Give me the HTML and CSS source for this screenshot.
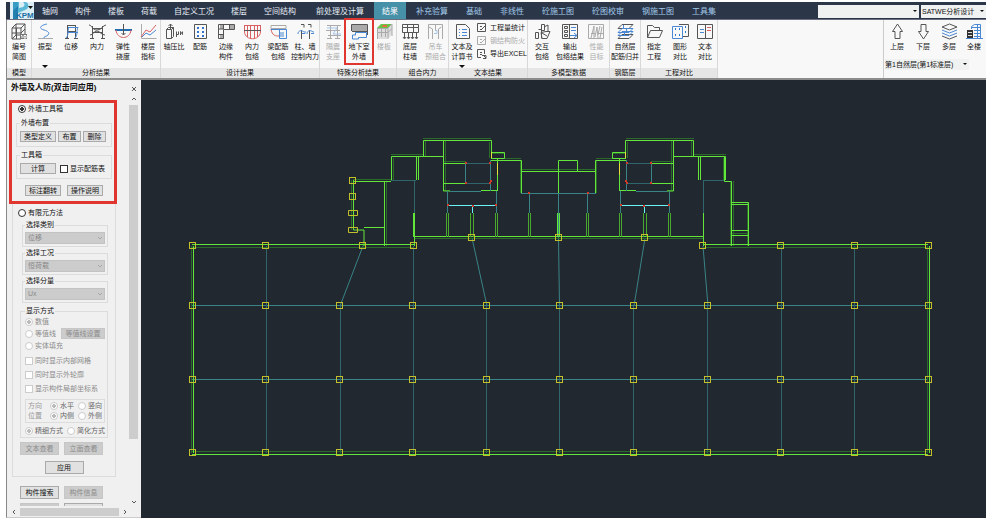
FILE: index.html
```html
<!DOCTYPE html>
<html lang="zh-CN">
<head>
<meta charset="utf-8">
<title>SATWE分析设计</title>
<link rel="stylesheet" href="styles.css">
</head>
<body>
<div class="app">
<header class="topbar">
  <svg class="logo" viewBox="0 0 24 17" role="img" aria-label="PKPM">
    <rect width="24" height="17" fill="#dceef5"/>
    <path d="M3 0h5v17H3z" fill="#3a9cc4"/><path d="M8 0h7c4 0 5 7 0 8L8 11z" fill="#5bb9d6"/><path d="M9 0h4c2 1 2 4 0 5L9 6z" fill="#dceef5"/>
    <path d="M3 9l5-5v13H3z" fill="#2280b0"/>
    <path d="M18 4h5l-2.500 3z" fill="#111"/>
    <text x="6" y="16" class="logo-text">KPM</text>
  </svg>
  <nav class="tabs">
    <a href="#">轴网</a><a href="#">构件</a><a href="#">楼板</a><a href="#">荷载</a><a href="#">自定义工况</a><a href="#">楼层</a><a href="#">空间结构</a>
  </nav>
  <nav class="tabs tabs-result">
    <a href="#">前处理及计算</a><a href="#" class="active">结果</a><a href="#">补充验算</a><a href="#">基础</a><a href="#">非线性</a><a href="#">砼施工图</a><a href="#">砼图校审</a><a href="#">钢施工图</a><a href="#">工具集</a>
  </nav>
  <div class="combos">
    <span class="combo combo-search"><select aria-label="搜索"><option></option></select></span>
    <span class="combo combo-module"><select aria-label="模块"><option>SATWE分析设计</option></select></span>
  </div>
</header>

<div class="ribbon">
  <section class="group g-model">
    <div class="items">
      <button class="tool"><svg viewBox="0 0 17 17"><path d="M1 5l4-4h9v11l-4 4H1zM1 5h9v11M10 5l4-4M5 1v11h9M1 16l4-4M1 10h9l4-4M5.500 5v11" class="k"/><path d="M9 11h7v5H9z" fill="#777"/><path d="M10 12.500h1v2.500M13 12.500h2v2.500h-2z" stroke="#fff" fill="none"/></svg><span>编号<br>简图</span></button>
    </div>
    <h2>模型</h2>
  </section>
  <section class="group g-analysis">
    <div class="items">
      <button class="tool more"><svg viewBox="0 0 17 17"><path d="M1 15.500h15" class="g"/><path d="M10 1C1 3 3 6 7 7s6 3 4 5-4 1-4 3" class="b"/></svg><span>振型</span></button>
      <button class="tool"><svg viewBox="0 0 17 17"><path d="M4.500 2v14M12.500 2v14M4 2.500h9M4 8.500h9M2 15.500h4M11 15.500h4" class="k"/><path d="M5 4.500h10M5 9.500h10M6 4c-2 5 0 8-3 11M15 4c-2 5 0 8-3 11" class="b"/></svg><span>位移</span></button>
      <button class="tool"><svg viewBox="0 0 17 17"><path d="M3.500 3v13M13.500 3v13M3 5.500h11M3 9.500h11M1 15.500h4M12 15.500h4" class="k"/><path d="M0 2c3 0 3 5 8 5s6-5 9-5M1 12c3 0 4-4 7-4s4 4 8 4" class="k"/></svg><span>内力</span></button>
      <button class="tool"><svg viewBox="0 0 17 17"><path d="M0 7h17" stroke="#236caf" stroke-width="2"/><path d="M1 7c1 10 14 10 15 0" class="r"/><path d="M8.500 1v11M6.500 10l2 2 2-2" class="k"/></svg><span>弹性<br>挠度</span></button>
      <button class="tool"><svg viewBox="0 0 17 17"><path d="M1.500 1v14.500h15" class="g"/><path d="M1 14l5-7 4 2 6-7" class="r"/><path d="M2 14l4-4 4 2 6-5" class="b"/></svg><span>楼层<br>指标</span></button>
    </div>
    <h2>分析结果</h2>
  </section>
  <section class="group g-design">
    <div class="items">
      <button class="tool"><svg viewBox="0 0 17 17"><path d="M.5 6.500h5v9h-5zM.5 6.500l2-2h5v9l-2 2M5.500 6.500l2-2M4.500 6V1M2.500 3l2-2 2 2" class="k"/><path d="M10.500 14V8.500M10.500 11.500h2V8.500M14.500 12V8.500l2 3V8.500" class="k"/></svg><span>轴压比</span></button>
      <button class="tool"><svg viewBox="0 0 17 17"><path d="M2.500 1.500h12v14h-12z" class="k"/><path d="M5 5h2M10 5h2M5 9h2M10 9h2M5 13h2M10 13h2" stroke="#2f76cd" stroke-width="2"/></svg><span>配筋</span></button>
      <button class="tool"><svg viewBox="0 0 17 17"><path d="M2 2h4v4H2zM12 2h4v4h-4zM2 12h4v4H2z" fill="#aaa"/><path d="M.5 1.500h16v5h-11v9h-5zM5.500 1v5H1M11.500 1v5M1 11.500h5" class="k"/></svg><span>边缘<br>构件</span></button>
      <button class="tool"><svg viewBox="0 0 17 17"><path d="M.5 2v7c1 9 15 9 16 0V2M3.500 2v12M6.500 2v14M10.500 2v14M13.500 2v12M0 2.500h17" class="r"/><path d="M0 7.500h17" class="k"/></svg><span>内力<br>包络</span></button>
      <button class="tool"><svg viewBox="0 0 17 17"><path d="M1 2.500h15v3H1z" class="g"/><path d="M1 6c1 7 5 7 8 7" class="r"/><path d="M9.500 6.500h7v9h-7zM1 6.500h15M13 9v5M11 9v5" class="b"/></svg><span>梁配筋<br>包络</span></button>
      <button class="tool"><svg viewBox="0 0 17 17"><path d="M4 1.500h3v3M11 1.500h3v3M4.500 7v9M12.500 7v9" class="k"/><path d="M1 11c0-4 4-4 6-2M10 11c0-4 4-4 6-2M5 10.500h3V8M14 10.500h3V8" class="b"/></svg><span>柱、墙<br>控制内力</span></button>
    </div>
    <h2>设计结果</h2>
  </section>
  <section class="group g-special">
    <div class="items">
      <button class="tool off"><svg viewBox="0 0 17 17"><path d="M2 2.500h14M1 7.500h14M3 12.500h13M5.500 2v14M12.500 2v14M2 15.500h5M10 15.500h5" class="g"/><path d="M2 5h10l-4 6h8" class="lb"/></svg><span>隔震<br>支座</span></button>
      <button class="tool marked"><svg viewBox="0 0 17 17"><path d="M1 1h15v7H1z" fill="#aaa"/><path d="M.5 8V1.500h16V12M1 8.500h15" class="k"/><path d="M4.500 9.500h11v5h-8v1.500h-6v-4h3z" class="b"/></svg><span>地下室<br>外墙</span></button>
      <button class="tool off"><svg viewBox="0 0 17 17"><path d="M1 5l4-4h11v10l-4 5H1z" fill="#ddd"/><path d="M1 5l4-4h11l-4 4z" fill="#68c548"/><path d="M7 2h4v2H6z" fill="#e86b42"/><path d="M1 5.500h11v10M1.500 5v11M12 5l4-4v12M5.500 5v9M1 9.500h11l4-4M9.500 6v8" class="g"/></svg><span>楼板</span></button>
    </div>
    <h2>特殊分析结果</h2>
  </section>
  <section class="group g-combine">
    <div class="items">
      <button class="tool"><svg viewBox="0 0 17 17"><path d="M.5 1.500h16v3H.5zM.5 4.500v5h16v-5M5.500 1v9M11.500 1v9M2.500 10v5M6.500 10v5M10.500 10v5M14.500 10v5M1 14l1.500 2L4 14M5 14l1.500 2L8 14M9 14l1.500 2 1.500-2M13 14l1.500 2 1.500-2" class="k"/></svg><span>底层<br>柱墙</span></button>
      <button class="tool off"><svg viewBox="0 0 17 17"><path d="M1.500 16V1.500h14V16M5.500 16V6L2 4M11.500 16V6l3-2M8.500 2v5" class="g"/><path d="M8 7.500h2v3H7" class="lb"/></svg><span>吊车<br>预组合</span></button>
    </div>
    <h2>组合内力</h2>
  </section>
  <section class="group g-text">
    <div class="items">
      <button class="tool more"><svg viewBox="0 0 17 17"><path d="M2.500 1.500h9l4 4v10h-13z" class="k"/><path d="M5 6.500h1M8 6.500h5M5 9.500h1M8 9.500h5M5 12.500h1M8 12.500h5" class="b"/></svg><span>文本及<br>计算书</span></button>
      <div class="stack">
        <button class="mini"><svg viewBox="0 0 10 10"><path d="M.5 .5h8v8h-8zM3 3.500h2M3 6l1 1 5-5" class="k"/></svg>工程量统计</button>
        <button class="mini off"><svg viewBox="0 0 10 10"><path d="M.5 .5h8v8h-8zM3 3.500h2M3 6l1 1 5-5" class="g"/></svg>钢结构防火</button>
        <button class="mini"><svg viewBox="0 0 10 10"><path d="M7.500 5V.5h-7v8H4M3 3.500h2M3 5.500h2M5 6.500h4v3H6M7 7l2 2" class="k"/></svg>导出EXCEL</button>
      </div>
    </div>
    <h2>文本结果</h2>
  </section>
  <section class="group g-multi">
    <div class="items">
      <button class="tool"><svg viewBox="0 0 17 17"><path d="M1.500 9.500h3v6h-3zM4.500 6.500h3v9M7.500 1.500h3v6h-3zM10 4l4-2v6M12 8.500h4l-3 7H8l-1-6zM8 10l5 3" class="k"/></svg><span>交互<br>包络</span></button>
      <button class="tool"><svg viewBox="0 0 17 17"><path d="M.5 1.500h15v14H.5zM7.500 1v15M2.500 3.500h3v2h-3zM2.500 7.500h3v2h-3zM2.500 11.500h3v2h-3z" class="k"/><path d="M9 4.500h5M9 7.500h5M8 12.500h7M12 10l3 2.500-3 2.500" class="b"/></svg><span>输出<br>包络结果</span></button>
      <button class="tool off"><svg viewBox="0 0 17 17"><path d="M.5 15.500v-14h15v14zM3 15l3-12v12M7 14l2-10 1 11M12 3l-2 9M14 4l-2 11M3 10.500h4M10 10.500h5" class="g"/></svg><span>性能<br>目标</span></button>
    </div>
    <h2>多模型数据</h2>
  </section>
  <section class="group g-rebar">
    <div class="items">
      <button class="tool"><svg viewBox="0 0 17 17"><path d="M1 5.500l4-4h11l-4 4zM1 15.500l4-4h11l-4 4z" class="k"/><path d="M1 9.500l4-4h11l-4 4zM1 12.500l4-4h11l-4 4zM6.500 2v4M9.500 5v4M7.500 8v4" class="b"/></svg><span>自然层<br>配筋归并</span></button>
    </div>
    <h2>钢筋层</h2>
  </section>
  <section class="group g-compare">
    <div class="items">
      <button class="tool"><svg viewBox="0 0 17 17"><path d="M1.500 14.500v-12h5l2 2h5v3M1.500 14.500l3-7h12l-3 7z" class="k"/></svg><span>指定<br>工程</span></button>
      <button class="tool"><svg viewBox="0 0 17 17"><path d="M7 1.500h9.500v12H11" class="k"/><path d="M.5 3.500h10v12H.5z" class="b"/><path d="M3 6h1M7 6h1M3 12h1M7 12h1M13 4h1M13 9h1" stroke="#2f76cd" stroke-width="2"/></svg><span>图形<br>对比</span></button>
      <button class="tool"><svg viewBox="0 0 17 17"><path d="M.5 1.500h15v14H.5zM8.500 1v15" class="k"/><path d="M3 6.500h4M3 9.500h4" class="b"/><path d="M10 4.500h4M10 7.500h4" class="r"/></svg><span>文本<br>对比</span></button>
    </div>
    <h2>工程对比</h2>
  </section>
  <section class="floors">
    <div class="items">
      <button class="tool"><svg viewBox="0 0 17 17"><path d="M8.500 1L13.500 8.500h-2.500v7H6v-7H3.500z" class="k"/></svg><span>上层</span></button>
      <button class="tool"><svg viewBox="0 0 17 17"><path d="M8.500 16L13.500 8.500h-2.500v-7H6v7H3.500z" class="k"/></svg><span>下层</span></button>
      <button class="tool"><svg viewBox="0 0 17 17"><path d="M1 4l7.500-3L16 4l-7.500 3zM1 13l7.500 3 7.500-3" class="k"/><path d="M1 7l7.500 3L16 7M1 10l7.500 3 7.500-3" class="b"/></svg><span>多层</span></button>
      <button class="tool"><svg viewBox="0 0 17 17"><path d="M5.500 6V3.500l3-2h6v14M6 4.500h9M8 7.500h7M8 10.500h7M8 13.500h7M11.500 1v15M0 15.500h17" class="b"/><path d="M1 7h6v8H1z" fill="#333"/><path d="M2 9.500h4M2 12.500h4" stroke="#ddd"/></svg><span>全楼</span></button>
    </div>
    <span class="combo combo-floor"><select aria-label="楼层"><option>第1自然层(第1标准层)</option></select></span>
  </section>
</div>

<main class="work">
<aside class="side">
  <div class="side-title"><h1>外墙及人防(双击同应用)</h1><button aria-label="关闭"><svg viewBox="0 0 6 6"><path d="M1 1l4 4M5 1L1 5" class="k"/></svg></button></div>
  <div class="side-body">
    <form class="panel">
      <div class="toolbox">
        <label class="line tool-mode"><input type="radio" name="mode" checked>外墙工具箱</label>
        <fieldset><legend>外墙布置</legend>
          <div class="buttons tight"><button type="button" class="w-l">类型定义</button><button type="button" class="w-s">布置</button><button type="button" class="w-s">删除</button></div>
        </fieldset>
        <fieldset><legend>工具箱</legend>
          <div class="buttons"><button type="button" class="w-l">计算</button><label class="line"><input type="checkbox">显示配筋表</label></div>
        </fieldset>
        <div class="buttons centre"><button type="button" class="w-l">标注翻转</button><button type="button" class="w-l">操作说明</button></div>
      </div>
      <div class="fem">
        <label class="line fem-mode"><input type="radio" name="mode">有限元方法</label>
        <fieldset class="pick"><legend>选择类别</legend><span class="drop"><select disabled aria-label="选择类别"><option>位移</option></select><svg viewBox="0 0 6 4"><path d="M1 1l2 2 2-2" class="g"/></svg></span></fieldset>
        <fieldset class="pick"><legend>选择工况</legend><span class="drop"><select disabled aria-label="选择工况"><option>恒荷载</option></select><svg viewBox="0 0 6 4"><path d="M1 1l2 2 2-2" class="g"/></svg></span></fieldset>
        <fieldset class="pick"><legend>选择分量</legend><span class="drop"><select disabled aria-label="选择分量"><option>Ux</option></select><svg viewBox="0 0 6 4"><path d="M1 1l2 2 2-2" class="g"/></svg></span></fieldset>
        <fieldset class="display"><legend>显示方式</legend>
          <label class="line dim"><input type="radio" name="show" disabled checked>数值</label>
          <div class="split"><label class="line dim"><input type="radio" name="show" disabled>等值线</label><button type="button" disabled>等值线设置</button></div>
          <label class="line dim"><input type="radio" name="show" disabled>实体填充</label>
          <div class="checks">
            <label class="line dim"><input type="checkbox" disabled>同时显示内部网格</label>
            <label class="line dim"><input type="checkbox" disabled>同时显示外轮廓</label>
            <label class="line dim"><input type="checkbox" disabled>显示构件局部坐标系</label>
          </div>
          <div class="axes">
            <span>方向</span><label class="line"><input type="radio" name="dir" disabled checked>水平</label><label class="line"><input type="radio" name="dir" disabled>竖向</label>
            <span>位置</span><label class="line"><input type="radio" name="pos" disabled checked>内侧</label><label class="line"><input type="radio" name="pos" disabled>外侧</label>
          </div>
          <div class="precision"><label class="line"><input type="radio" name="prec" disabled checked>精细方式</label><label class="line"><input type="radio" name="prec" disabled>简化方式</label></div>
        </fieldset>
        <div class="buttons wide"><button type="button" disabled>文本查看</button><button type="button" disabled>立面查看</button></div>
        <div class="buttons wide apply"><button type="button">应用</button></div>
      </div>
      <div class="buttons wide search"><button type="button">构件搜索</button><button type="button" disabled>构件信息</button></div>
      <div class="buttons wide last"><button type="button" disabled></button><button type="button"></button></div>
    </form>
    <div class="vscroll"><svg viewBox="0 0 6 4"><path d="M1 3l2-2 2 2" class="k"/></svg><i></i><svg viewBox="0 0 6 4"><path d="M1 1l2 2 2-2" class="k"/></svg></div>
  </div>
  <div class="hscroll"><svg viewBox="0 0 4 6"><path d="M3 1L1 3l2 2" class="k"/></svg><i></i><svg viewBox="0 0 4 6"><path d="M1 1l2 2-2 2" class="k"/></svg></div>
</aside>

<svg class="plan" viewBox="141 80 845 438" preserveAspectRatio="xMinYMin meet" role="img" aria-label="结构平面图">
  <defs><rect id="n" x="-3" y="-3" width="6" height="6"/></defs>
  <g class="axis">
    <path d="M192 305.500H928M192 379.500H928"/>
    <path class="soft" d="M266.500 246V453M340.500 306V453M413.500 246V453M486.500 306V453M559.500 306V453M633.500 306V453M707.500 306V453M781.500 246V453M854.500 246V453"/>
    <path d="M363 246L340 306M472 238L487 306M558.500 193V238L559.500 306M645 238L634 306M703 246L708 306"/>
  </g>
  <g class="dark"><path d="M192 247.500H414M703 247.500H928M192 451.500H928M191.500 246V453M927.500 246V453M414 238.500H704M353 179.500H391M351.500 180V230M386.500 181V246M732 233.500H748M730.500 181V246M733.500 181V246M747.500 202V246"/></g>
  <g class="wall"><path d="M192 244.500H414M703 244.500H928M192 454.500H928M193.500 246V453M929.500 246V453M414 236.500H704M353 181.500H391M353.500 180V230H364V246M364 227.500H384M384.500 181V246M414.500 213V246M413.500 213V237M703.500 213V246M724.500 157V181.500H731.500V246M732 202.500H748.500V246M732 204.500H748M732 230.500H748M732 235.500H748"/></g>
  <path class="axis soft" d="M391 180.500H416M414.500 180V213M703.500 180V213M703 180.500H724"/>
  <g id="wing">
    <path class="dark" d="M423 138.500H491M425.500 141V156M445.500 140V191M391 154.500H423M393.500 158V180M444 161.500H466M489.500 142V158M491 153.500H505M505 158.500H521M520.500 160V193M521 169.500H558M444 190.500H450"/>
    <path class="wall" d="M423.500 157V140.500H491.500V158M443.500 140V191H450M391.500 180V156.500H444M416.500 157V180M418.500 157V180M491 152.500H504.500V158.500H491M490.500 163V160.500H521.500V193M521 171.500H558.500M444 163.500H466M444 183.500H466M481 190.500H498M497.500 159V163M497.500 175V191"/>
    <path class="axis" d="M465.500 163V183M490.500 160V191M450 191.500H481M447.500 191V213M496.500 191V213M521 193.500H558M529.500 193V213"/>
    <path class="axis soft" d="M466 163.500H490M466 183.500H490"/>
    <path class="yellow" d="M497.500 163V175M491.500 152V158"/>
    <path class="cyan" d="M448 205.500H496M472.500 206V213"/>
    <path class="double" d="M446.500 213V237M448.500 213V237M470.500 213V237M473.500 213V237M495.500 213V237M497.500 213V237M528.500 213V237M530.500 213V237"/>
    <path class="red" d="M465 163h2M465 183h2M489 163h2M489 183h2M490 181h2M528 193h2M447 205h2M495 205h2M472 206h2"/>
  </g>
  <use href="#wing" transform="matrix(-1 0 0 1 1117 0)"/>
  <path class="wall" d="M558.500 193V160.500H577.500V171M557.500 213V237M559.500 213V237"/>
  <g class="nodes">
    <use href="#n" x="192.500" y="245.500"/><use href="#n" x="265.500" y="245.500"/><use href="#n" x="362.500" y="245.500"/><use href="#n" x="413.500" y="245.500"/><use href="#n" x="702.500" y="245.500"/><use href="#n" x="780.500" y="245.500"/><use href="#n" x="854.500" y="245.500"/><use href="#n" x="928.500" y="245.500"/>
    <use href="#n" x="471.500" y="237.500"/><use href="#n" x="558.500" y="237.500"/><use href="#n" x="644.500" y="237.500"/>
    <use href="#n" x="352.500" y="180.500"/><use href="#n" x="352.500" y="196.500"/>
    <path d="M348.500 210.500h9v5h-9zM348.500 227.500h9v5h-9z"/>
    <g id="row"><use href="#n" x="192.500" y="305.500"/><use href="#n" x="265.500" y="305.500"/><use href="#n" x="339.500" y="305.500"/><use href="#n" x="412.500" y="305.500"/><use href="#n" x="486.500" y="305.500"/><use href="#n" x="559.500" y="305.500"/><use href="#n" x="633.500" y="305.500"/><use href="#n" x="707.500" y="305.500"/><use href="#n" x="780.500" y="305.500"/><use href="#n" x="854.500" y="305.500"/><use href="#n" x="928.500" y="305.500"/></g>
    <use href="#row" y="74"/><use href="#row" y="147"/>
  </g>
</svg>
</main>
</div>
</body>
</html>
```
FILE: styles.css
```css
* { box-sizing: border-box; }
body {
  margin: 0;
  background: #fff;
  color: #111;
  font-family: "Liberation Sans", "Noto Sans CJK SC", sans-serif;
  font-size: 7px;
  line-height: 10px;
}
button, select, input { font: inherit; color: inherit; margin: 0; }
button { padding: 0; border: 0; background: none; white-space: nowrap; }
h1, h2 { margin: 0; font-weight: normal; }
svg { display: block; flex: none; }
.k, .g, .b, .r, .lb { fill: none; stroke: #555; }
.g { stroke: #aaa; }
.b { stroke: #4a88d4; }
.lb { stroke: #a5c4ea; }
.r { stroke: #d96060; }

.app {
  display: flex;
  flex-direction: column;
  height: 100vh;
  padding: 2px 2px 2px 6px;
}

/* Tab bar */
.topbar {
  display: flex;
  height: 18px;
  background: #2b3648;
  border-bottom: 1px solid #6d6d80;
}
.logo { width: 24px; height: 17px; margin-left: 4px; }
.logo-text { font-size: 8px; font-weight: bold; fill: #1c6fa3; }
.tabs { display: flex; gap: 1px; font-size: 8px; line-height: 20px; }
.tabs-result { gap: 2px; margin-left: 4px; }
.tabs a { padding: 0 8px; color: #e6edf5; text-decoration: none; white-space: nowrap; height: 17px; }
.tabs-result a { color: #a3cbea; }
.tabs-result a:first-child { color: #e6edf5; }
.tabs .active { background: #4690a8; color: #fff; }
.combos { display: flex; gap: 2px; margin: 3px 0 1px auto; }
.combo { position: relative; background: #f0f1f1; }
.combo::after {
  content: "";
  position: absolute;
  right: 2px;
  top: 5px;
  border: 2px solid transparent;
  border-top-color: #111;
}
.combo select { display: block; width: 100%; height: 100%; padding: 0 1px; border: 0; background: none; appearance: none; }
.combo-search { width: 101px; }
.combo-module { width: 65px; }

/* Ribbon */
.ribbon {
  display: flex;
  height: 60px;
  background: #f8f8f8;
  border-bottom: 2px solid #8c8c8c;
  border-left: 1px solid #888;
}
.group { display: flex; flex-direction: column; border-right: 1px solid #d8d8d8; }
.group h2 { height: 10px; background: #e6e6e6; font-size: 7px; text-align: center; white-space: nowrap; }
.items { display: flex; flex: 1; }
.tool {
  position: relative;
  display: flex;
  flex-direction: column;
  align-items: center;
  gap: 2px;
  width: 26px;
  padding-top: 3px;
}
.tool svg { width: 17px; height: 17px; }
.tool:last-child { flex: 1; }
.more::after {
  content: "";
  position: absolute;
  top: 45px;
  border: 3px solid transparent;
  border-top-color: #111;
  border-bottom: 0;
}
.off { color: #aaa; }
.g-model { width: 25px; }
.g-analysis { width: 129px; }
.g-design { width: 159px; }
.g-special { width: 77px; }
.g-combine { width: 52px; }
.g-text { width: 79px; }
.g-multi { width: 82px; }
.g-multi .tool { width: 28px; }
.g-rebar { width: 31px; }
.g-compare { width: 77px; }
.marked { z-index: 1; }
.marked::before {
  content: "";
  position: absolute;
  inset: -2px -2px 3px -2px;
  border: 2px solid #df3730;
}
.stack { display: flex; flex-direction: column; padding: 1px 0 0 2px; }
.mini { display: flex; align-items: center; gap: 3px; height: 13px; }
.mini svg { width: 10px; height: 10px; }
.floors {
  width: 103px;
  margin-left: auto;
  padding-bottom: 8px;
  display: flex;
  flex-direction: column;
  border-left: 1px solid #ccc;
}
.combo-floor { width: 84px; height: 11px; margin-left: 1px; }
.combo-floor::after { top: 4px; }
.floors .combo select { padding: 0; }

/* Work area */
.work { display: flex; flex: 1; min-height: 0; }
.side {
  display: flex;
  flex-direction: column;
  width: 135px;
  background: #f0f0f0;
  border-left: 1px solid #888;
  border-bottom: 1px solid #ccc;
}
.side-title { display: flex; justify-content: space-between; padding: 3px 4px 0 4px; height: 14px; }
.side-title h1 { font-size: 8px; font-weight: bold; }
.side-title button { width: 6px; height: 10px; }
.side-title svg { margin-top: 2px; }
.side-body { display: flex; flex: 1; min-height: 0; }
.panel { width: 122px; padding-top: 6px; overflow: hidden; }
.toolbox {
  display: flex;
  flex-direction: column;
  gap: 4px;
  width: 108px;
  height: 104px;
  margin-left: 2px;
  padding: 0 2px 0 4px;
  border: 3px solid #df3730;
}
.line { display: flex; align-items: center; gap: 2px; height: 12px; white-space: nowrap; }
.tool-mode { padding-left: 2px; }
.dim { color: #8b8b8b; }
input { appearance: none; width: 8px; height: 8px; border: 1px solid #333; background: #fff; flex: none; }
input[type="radio"] { border-radius: 50%; }
input[type="radio"]:checked { background: radial-gradient(#333 0 2px, #fff 2px); }
input:disabled { border-color: #ccc; }
input[type="radio"]:disabled:checked { background: radial-gradient(#bbb 0 2px, #fff 2px); }
fieldset { min-width: 0; margin: 0; padding: 4px 3px; border: 1px solid #dcdcdc; }
legend { height: 8px; padding: 0 1px; line-height: 8px; }
.buttons { display: flex; gap: 4px; }
.buttons .line { height: 11px; }
.buttons.tight { gap: 2px; }
.buttons.centre { justify-content: center; gap: 6px; padding-top: 2px; }
.buttons button, .split button {
  height: 11px;
  border: 1px solid #aaa;
  background: #e1e1e1;
  line-height: 9px;
}
.buttons .w-l { width: 36px; }
.buttons .w-s { width: 23px; }
.buttons button:disabled, .split button:disabled { border-color: #c6c6c6; background: #ccc; color: #8b8b8b; }
.fem { width: 104px; margin-left: 5px; padding: 3px 7px 2px; border: 1px solid #dcdcdc; border-top: 0; }
.fem-mode { margin-left: -2px; margin-bottom: 2px; }
.pick { margin: 0 0 2px 2px; padding: 3px 2px 2px; }
.drop { position: relative; display: block; }
.drop select {
  display: block;
  width: 100%;
  height: 12px;
  padding: 0 2px;
  border: 1px solid #c2c2c2;
  background: #ccc;
  color: #888;
  opacity: 1;
  appearance: none;
}
.drop svg { position: absolute; right: 2px; top: 4px; width: 6px; height: 4px; }
.display { margin-top: 4px; padding: 1px 2px 0 4px; }
.split { display: flex; justify-content: space-between; }
.split button { width: 44px; }
.checks { padding: 2px 0 3px; }
.checks .line { height: 14px; }
.axes {
  display: grid;
  grid-template-columns: 22px 28px 1fr;
  padding: 1px 2px;
  border: 1px solid #dcdcdc;
  color: #999;
}
.axes .line { height: 10px; color: #666; }
.precision { display: flex; justify-content: space-between; padding-top: 2px; color: #666; }
.wide { gap: 5px; margin-top: 4px; }
.wide button { width: 39px; height: 13px; line-height: 11px; }
.apply { justify-content: center; margin-top: 6px; }
.search { margin: 9px 0 0 13px; }
.last { margin-left: 13px; }
.vscroll, .hscroll { display: flex; align-items: center; gap: 4px; }
.vscroll { flex-direction: column; width: 9px; padding: 3px 0 2px; }
.vscroll svg { width: 6px; height: 4px; }
.vscroll i { width: 100%; flex: 1; margin-bottom: 57px; background: #cdcdcd; }
.hscroll { height: 11px; padding: 0 14px 0 5px; }
.hscroll svg { width: 4px; height: 6px; }
.hscroll i { flex: 1; height: 8px; background: #cdcdcd; }

/* Floor plan */
.plan { flex: 1; min-width: 0; height: 100%; background: #222830; fill: none; }
.axis { stroke: #398486; }
.soft { stroke: #2f666b; }
.wall { stroke: #62e63a; }
.dark { stroke: #2c6a2a; }
.double { stroke: #49a92f; }
.cyan { stroke: #69f5f5; }
.yellow { stroke: #e5df3a; }
.red { stroke: #d33a2a; stroke-width: 2px; }
.nodes { stroke: #c4c02c; }
```
